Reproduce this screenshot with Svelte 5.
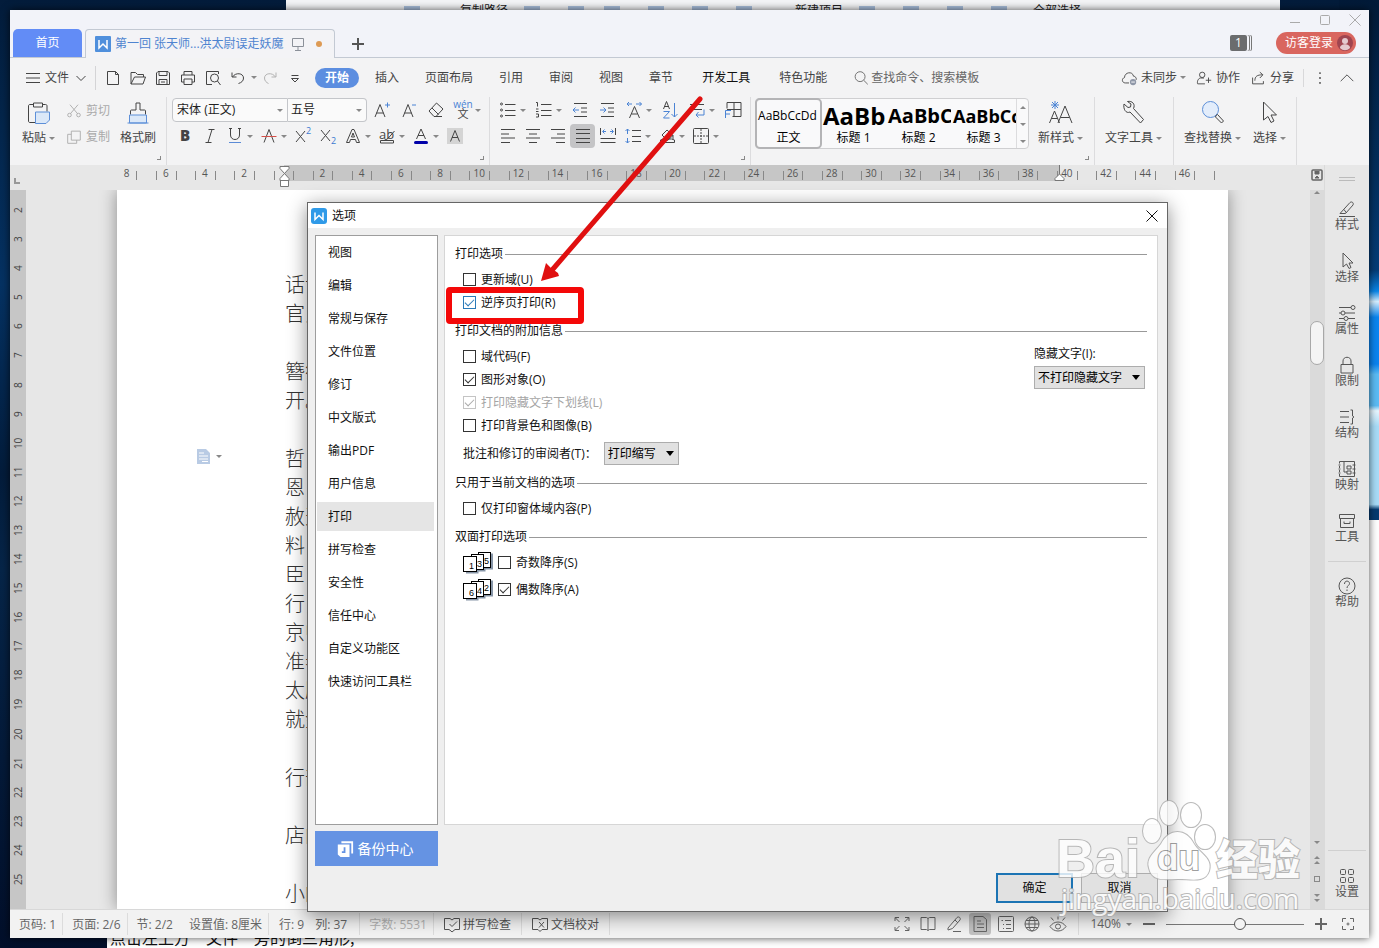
<script>
  const icons = {
    menu: '<path d="M3 5.500h14M3 10h14M3 14.500h14"/>',
    chevDown: '<path d="M5.500 8l4.500 4.500L14.500 8"/>',
    chevUp: '<path d="M3 13.500l7-7 7 7"/>',
    newDoc: '<path d="M4.500 3.500h8l3 3v10h-11zM12.500 3.500v3h3"/>',
    open: '<path d="M3 16V4.500h4.500l2 2h6v2.500M3 16l3.500-7h11l-2.500 7z"/>',
    save: '<path d="M3.500 5l1.500-1.500h10l1.500 1.500v11.500h-13zM6 3.500v4h8v-4M6 16.500v-5h8v5M8 14h4"/>',
    print: '<path d="M6 7V3.500h8V7M6 14H3.500V7h13v7H14M6 11h8v5.500H6z"/>',
    preview: '<path d="M9 16.500H3.500v-13h12V6"/><circle cx="11.500" cy="10" r="4"/><path d="M14.500 13l3 4"/>',
    undo: '<path d="M4 4.500v4.500h4.500M4.500 9c3-5 11-4 11 1 0 3-2 4.500-5 5.500"/>',
    redo: '<path d="M16 4.500v4.500h-4.500M15.500 9c-3-5-11-4-11 1 0 3 2 4.500 4 5.500"/>',
    more: '<path d="M6.500 7.500h7M6.500 10.500h7L10 14z"/>',
    search: '<circle cx="9" cy="8.500" r="5.500"/><path d="M13 12.500l4.500 4.500"/>',
    cloud: '<path d="M10 15.500H6c-4 0-4.500-5-1-6 0-6 9-7.500 10-1.500 2 0 3.500 2 3 4"/><circle cx="14.500" cy="14.500" r="3.500" fill="#8f97a8" stroke="none"/><path d="M12.500 14.500h4" stroke="#fff"/>',
    person: '<circle cx="8" cy="6.500" r="3"/><path d="M10 10H6c-4 1-3.500 6.500-3 6.500h8M12 12.500h6M15 9.500v6"/>',
    share: '<path d="M4 9.500v7h12v-3M6.500 13c0-5 3-6.500 8-6.500M12 3.500l3.500 3-3.500 3.500"/>',
    dots: '<g fill="currentColor" stroke="none"><circle cx="10" cy="4.500" r="1"/><circle cx="10" cy="10" r="1"/><circle cx="10" cy="15.500" r="1"/></g>',
    paste: '<path d="M6.500 4H3c-1 0-1.500.500-1.500 1.500v15c0 1 .500 1.500 1.500 1.500h5M15.500 4h3c1 0 1.500.500 1.500 1.500V11M6.500 2.500h9v4h-9z"/><path d="M8.500 11.500h14v8l-3.500 3.500h-10.500z" fill="#dbe8f8" stroke="#5d8fd8"/>',
    cut: '<circle cx="5" cy="14.500" r="2"/><circle cx="15" cy="14.500" r="2"/><path d="M6 13L14.500 3M14 13L5.500 3"/>',
    copy: '<path d="M7 3.500h10v10H7zM13 13.500V17H3V7h4"/>',
    brush: '<path d="M4.500 14V10.500c0-1 .500-1 1.500-1h4V2.500h4v7h4c1 0 1.500 0 1.500 1V14"/><path d="M3.500 14.500h17v8H3.500z" fill="#dbe8f8" stroke="#5d8fd8"/><path d="M1.500 22.500h21" stroke="#5d8fd8"/>',
    fontUp: '<path d="M3 17L8 4.500 13 17M4.500 13h7"/><path d="M13 5h5M15.500 2.500v5" stroke="#4a83d4"/>',
    fontDown: '<path d="M4 17L9 4.500 14 17M5.500 13h7"/><path d="M13 5h4" stroke="#4a83d4"/>',
    eraser: '<path d="M3 11l7.500-8 6.500 6-7 7.500H8zM6 8l6.500 6.500M9 16.500h7"/>',
    pinyin: '<text x="10" y="8" text-anchor="middle" font-size="10" fill="#4a83d4" stroke="none">wén</text><text x="10" y="18" text-anchor="middle" font-size="11" fill="currentColor" stroke="none">文</text>',
    bold: '<text x="10" y="15" text-anchor="middle" font-size="15" font-weight="800" fill="currentColor" stroke="none">B</text>',
    italic: '<path d="M8.500 3.500h6M5.500 16.500h6M12 3.500L8 16.500"/>',
    underline: '<path d="M5.500 2.500V9c0 6 9 6 9 0V2.500M4 2.500h3M13 2.500h3"/><path d="M4 16.500h12" stroke="#5b8bd6"/>',
    strike: '<path d="M5 16.500L10 3.500l5 13"/><path d="M2.500 10.500h15" stroke="#d4504a"/>',
    sup: '<path d="M3 5l9 11M12 5L3 16"/><text x="13" y="8" font-size="9" fill="#3b79d0" stroke="none">2</text>',
    sub: '<path d="M3 4l9 11M12 4L3 15"/><text x="13" y="18" font-size="9" fill="#3b79d0" stroke="none">2</text>',
    effect: '<path d="M3.500 16.500L9 3.500h2l5.500 13h-3l-1-3h-5l-1 3zM8.500 11h3L10 7z"/>',
    hilite: '<text x="2" y="13" font-size="13" fill="currentColor" stroke="none">ab</text><path d="M17.500 5l-7 8-3 1M3.500 14.500h13v2.500h-13z"/>',
    color: '<path d="M5.500 13l4.500-10 4.500 10M7 9.500h6"/><path d="M4.500 16.500h11" stroke="#0000a8" stroke-width="3" stroke-linecap="round"/>',
    shade: '<rect x="2" y="2" width="16" height="16" fill="#d4d4d4" stroke="none"/><path d="M5.500 15.500l4.500-11 4.500 11M7 11.500h6"/>',
    bullets: '<g><circle cx="3.500" cy="4" r="1"/><circle cx="3.500" cy="10" r="1"/><circle cx="3.500" cy="16" r="1"/></g><path d="M7 4.500h10.500M7 10.500h10.500M7 15.500h10.500"/>',
    numbers: '<path d="M2 2.500h1.500v4M2 9h2.500M2 11.500h2.500M2 14h2.500v3H2M7 4.500h10.500M7 10.500h10.500M7 15.500h10.500"/>',
    outdent: '<path d="M4 3.500h13M11 8h6M11 12h6M4 16.500h13"/><path d="M9 10H3M5.500 7.500L3 10l2.500 2.500" stroke="#4a83d4"/>',
    indent: '<path d="M4 3.500h13M11 8h6M11 12h6M4 16.500h13"/><path d="M3 10h6M6.500 7.500L9 10l-2.500 2.500" stroke="#4a83d4"/>',
    spread: '<path d="M5.500 18L10.500 6.500 15.500 18M7.500 14h6"/><path d="M8 4H3m2-2L3 4l2 2M12 4h5.500m-2-2l2 2-2 2" stroke="#4a83d4"/>',
    sort: '<path d="M3.500 9l3-7.500L9.500 9M4.500 6.500h4"/><path d="M3.500 11.500h6l-6 6.500h6M14.500 3v14M11.500 14l3 3 3-3" stroke="#4a83d4"/>',
    wrap: '<path d="M3 4.500h14M3 9.500h12"/><path d="M17 9.500V15H9m2.500-3L9 15l2.500 2.500" stroke="#4a83d4"/>',
    tab: '<path d="M4 8.500V2.500h14v14H9.500M11 2.500v14M4 9.500h14"/><path d="M2.500 18v-7.500H8M2.500 14H7" stroke="#4a83d4"/>',
    alLeft: '<path d="M3 3.500h14M3 8h8M3 12h14M3 16.500h9"/>',
    alCenter: '<path d="M3 3.500h14M6 8h8M3 12h14M6 16.500h8"/>',
    alRight: '<path d="M3 3.500h14M9 8h8M3 12h14M8 16.500h9"/>',
    justify: '<path d="M3 3.500h14M3 7.500h14M3 12.500h14M3 16.500h14"/>',
    distribute: '<path d="M2.500 2v7M17.500 2v7M2.500 12.500h15M2.500 16.500h15"/><path d="M8 5.500H5m1.500-2l-2 2 2 2M12 5.500h3m-1.500-2l2 2-2 2" stroke="#4a83d4"/>',
    leading: '<path d="M9 4.500h9M9 10.500h9M9 15.500h9"/><path d="M4.500 3v5M2.500 5l2-2 2 2M4.500 17v-5M2.500 15l2 2 2-2" stroke="#4a83d4"/>',
    fill: '<path d="M5 9l5-5 6 5.500-5.500 5zM16 9v4M3.500 14l3-1h8l3 1v2.500h-14z"/><path d="M6 17l9-8" stroke="#d4504a"/>',
    border: '<rect x="2.500" y="2.500" width="15" height="15" rx="1"/><path d="M10 3v14M3 10h14" stroke-dasharray="2 1"/>',
    newStyle: '<path d="M1.500 23l5-12 5 12M3.500 18.500h6M10 23l7-17 7 17M12.500 17.500h9"/><path d="M7 1v8M3 5h8M4 2l6 6M10 2L4 8" stroke="#4a83d4"/>',
    wrench: '<path d="M3 4l4 3.500 2.500-.500.500-3-3.500-2.500c5-1 8 3 6 7l10 11-3 3.500-10.500-11C5 14 2 9 3 4z"/>',
    find: '<circle cx="10.500" cy="9.500" r="8" fill="#e3edfb" stroke="#5d8fd8"/><path d="M16 15.500l1.500-1 6 6.500-2 2-6-6z"/>',
    pointer: '<path d="M6.500 2v18l4.500-3.500 3 6 3-1.500-3-6h5.500z"/>',
    pen: '<path d="M3 14.500L13 3.500c2-1.500 4 .500 3 2.500L8.500 14.500zM2 17.500h16M7 10.500l2.500 3.500"/>',
    cursor: '<path d="M6 2v14l3.500-3 2.500 4.500 2-1-2-4.500h4z"/>',
    sliders: '<path d="M2 4.500h12M2 10h2M8 10h10M2 15.500h5M11 15.500h7"/><circle cx="16" cy="4.500" r="2"/><circle cx="6" cy="10" r="2"/><circle cx="9" cy="15.500" r="2"/>',
    lock: '<path d="M4 9.500h12v8.500H4zM6 9.500V6c0-5 8-5 8 0v3.500"/>',
    struct: '<path d="M3 4.500h9M3 10h9M3 15.500h9M13.500 3h2v6l1.500 1-1.500 1v6h-2"/>',
    mapping: '<path d="M2.500 2.500h15v15h-15M2.500 2.500v2M2.500 7v2M2.500 11v2M2.500 15v2.500M1.500 6h2M1.500 10h2M1.500 14h2M15.500 6h3M15.500 10h3M15.500 14h3M7 3v10h3M10 7h4v3h-4zM10 12h4v3h-4z"/>',
    box: '<path d="M2.500 3.500h15v4h-15zM3.500 7.500h13v9h-13zM7 10.500v2h6v-2"/>',
    help: '<circle cx="10" cy="10" r="8"/><path d="M7.500 8c0-4 5-3.500 5-.500 0 2-2.500 2-2.500 4.500M10 13.500v1.500"/>',
    grid: '<rect x="3.500" y="3.500" width="5" height="5" rx="1"/><rect x="11.500" y="3.500" width="5" height="5" rx="1"/><rect x="3.500" y="11.500" width="5" height="5" rx="1"/><rect x="11.500" y="11.500" width="5" height="5" rx="1"/>',
    bookOk: '<path d="M9 16L7 14.500H2.500v-11H8l2 1.500 2-1.500h5.500v11H13L10 17zM7.500 9l2.500 2.500 5-5"/>',
    bookX: '<path d="M10 16.500l-2-2H2.500v-11H8l2 1.500 2-1.500h5.500v11H12zM9 7l5 5.500M14 7l-5 5.500"/>',
    full: '<path d="M3 7V3.500h4M3.500 4l4 4M13 3.500h4V7M16.500 4l-4 4M3 13v3.500h4M3.500 16l4-4M13 16.500h4V13M16.500 16l-4-4"/>',
    book: '<path d="M10 4.500L8.500 3.500H3v12h5.500l1.500 1 1.500-1H17v-12h-5.500zM10 4.500v12"/>',
    pencil: '<path d="M4 14L13 3.500c2-1.500 4 .500 3 2.500L8.500 14.500 4 16zM9 17.500h8M11 6l3 3"/>',
    page: '<path d="M4 2.500h9l3.500 3v12H4zM7 7h4M7 10h7M7 13.500h7"/>',
    outline: '<rect x="2.500" y="2.500" width="15" height="15" rx="1"/><path d="M5.500 6.500h1.500M9 6.500h6M7 10.500h1M10 10.500h5M7 14.500h1M10 14.500h5"/>',
    globe: '<circle cx="10" cy="10" r="7"/><ellipse cx="10" cy="10" rx="3" ry="7"/><path d="M3 10h14M4 6.500h12M4 13.500h12"/>',
    eye: '<path d="M2 12.500c4-6 12-6 16 0-4 6-12 6-16 0z"/><circle cx="10" cy="12.500" r="2.500"/><path d="M10 5.500V2.500M5.500 6.500L3 3.500M14.500 6.500L17 3.500"/>',
    minus: '<path d="M4 10h12" stroke-width="2"/>',
    plus: '<path d="M4 10h12M10 4v12" stroke-width="2"/>',
    fit: '<path d="M4.500 8V4.500H8M12 4.500h3.500V8M15.500 12v3.500H12M8 15.500H4.500V12M10 8.500v3M8.500 10h3"/>',
    monitor: '<path d="M4.500 4.500h11v8h-11zM10 12.500v4M7 16.500h6"/>',
    backup: '<path d="M6 2.500h12V15" stroke-width="2"/><path d="M2 5h13v14H5l-3-3z" fill="#fff" stroke="none"/><path d="M9.500 8v5.500H6.500" stroke="#6593e3" stroke-width="2"/>',
    close: '<path d="M4.500 4.500l11 11M15.500 4.500l-11 11"/>',
    winMin: '<path d="M5 12.500h10"/>',
    winMax: '<rect x="5.500" y="5.500" width="9" height="9" rx="1"/>'
  };

  const quick = ['newDoc', 'open', 'save', 'print', 'preview'];
  const menus = ['开始', '插入', '页面布局', '引用', '审阅', '视图', '章节', '开发工具', '特色功能'];
  const fontTop = [['fontUp'], ['fontDown'], ['eraser'], ['pinyin', 1]];
  const fontBottom = [['bold'], ['italic'], ['underline', 1], ['strike', 1], ['sup'], ['sub'], ['effect', 1], ['hilite', 1], ['color', 1], ['shade']];
  const paraTop = [['bullets', 1], ['numbers', 1], ['outdent'], ['indent'], ['spread', 1], ['sort'], ['wrap', 1], ['tab']];
  const paraBottom = [['alLeft'], ['alCenter'], ['alRight'], ['justify'], ['distribute'], ['leading', 1], ['fill', 1], ['border', 1]];
  const styles = [
    { name: '正文', sample: 'AaBbCcDd', kind: 'plain' },
    { name: '标题 1', sample: 'AaBb', kind: 'h1' },
    { name: '标题 2', sample: 'AaBbC', kind: 'h2' },
    { name: '标题 3', sample: 'AaBbCc', kind: 'h3' }
  ];
  const hRuler = [8, 6, 4, 2, 0, ...Array.from({ length: 23 }, (_, i) => (i + 1) * 2)];
  const vRuler = Array.from({ length: 24 }, (_, i) => i + 2);
  const lines = ['话说', '官员', '', '簪笏', '开。', '', '哲，', '恩，', '赦天', '料，', '臣，', '行，', '京师', '准奏', '太尉', '就金', '', '行部', '', '店内', '', '小的'];
  const side = [['pen', '样式'], ['cursor', '选择'], ['sliders', '属性'], ['lock', '限制'], ['struct', '结构'], ['mapping', '映射'], ['box', '工具']];
  const pages = ['视图', '编辑', '常规与保存', '文件位置', '修订', '中文版式', '输出PDF', '用户信息', '打印', '拼写检查', '安全性', '信任中心', '自定义功能区', '快速访问工具栏'];
  const views = ['full', 'book', 'pencil', 'page', 'outline', 'globe', 'eye'];

  let current = $state('打印');
  let zoom = $state(54);
  let opts = $state({ update: false, reverse: true, codes: false, graphics: true, hidden: true, background: false, form: false, odd: false, even: true });
</script>

{#snippet icon(name, size = 20, box = 20)}
  <svg width={size} height={size} viewBox="0 0 {box} {box}" fill="none" stroke="currentColor" aria-hidden="true">{@html icons[name]}</svg>
{/snippet}

{#snippet tools(list, spaced)}
  <div class="tools" class:spaced>
    {#each list as [name, drop]}
      <button class="tool" class:drop class:on={name === 'justify'} aria-label={name}>
        <span class="glyph">{@render icon(name)}</span>
        {#if drop}<i class="caret"></i>{/if}
      </button>
    {/each}
  </div>
{/snippet}

{#snippet check(key, text, disabled = false)}
  <label class="check" class:disabled>
    <input type="checkbox" bind:checked={opts[key]} {disabled} class:hot={key === 'reverse'} />{text}
  </label>
{/snippet}

{#snippet order(digits)}
  <svg width="30" height="22" viewBox="0 0 30 22" fill="#fff" stroke="#000" aria-hidden="true">
    <path d="M3 20.500h11.500v-2h7v-2h7.500v-15" fill="none" stroke="#8796a8" stroke-width="2" />
    <rect x="15.500" y=".5" width="12" height="15" />
    <rect x="8.500" y="2.500" width="12" height="15" />
    <rect x=".5" y="4.500" width="13" height="15" />
    <g fill="#000" stroke="none" font-size="9" font-family="Liberation Sans">
      <text x="6" y="17">{digits[0]}</text><text x="14" y="15">{digits[1]}</text><text x="21" y="12">{digits[2]}</text>
    </g>
  </svg>
{/snippet}

<div class="desktop">
  <div class="explorer">
    <span class="peek"></span><span>复制路径</span><span class="peek"></span><span class="peek"></span><span>新建项目</span><span class="peek"></span><span>全部选择</span>
  </div>
  <div class="article">点击左上方“文件”旁的倒三角形,</div>
  <div class="sky"></div>

  <div class="window">
    <header class="titlebar">
      <button class="home">首页</button>
      <div class="tab">
        <svg width="16" height="16" viewBox="0 0 16 16" aria-hidden="true"><rect width="16" height="16" rx="1" fill="#4f8fdc" /><path d="M4 4v8l4-4 4 4V4" fill="none" stroke="#fff" stroke-width="1.500" /></svg>
        <span>第一回 张天师...洪太尉误走妖魔</span>
        <span class="monitor">{@render icon('monitor')}</span>
        <i class="dot"></i>
      </div>
      <button class="add" aria-label="新建">{@render icon('plus')}</button>
      <div class="corner">
        <div class="winbtns">
          <button aria-label="最小化">{@render icon('winMin')}</button>
          <button aria-label="最大化">{@render icon('winMax')}</button>
          <button aria-label="关闭">{@render icon('close')}</button>
        </div>
        <div class="account">
          <span class="count">1</span>
          <button class="login">访客登录
            <svg width="16" height="16" viewBox="0 0 16 16" aria-hidden="true"><circle cx="8" cy="8" r="8" fill="#a04550" /><circle cx="8" cy="6" r="3" fill="#e5c9cf" /><path d="M3 13c0-5 10-5 10 0-3 3-7 3-10 0z" fill="#e5c9cf" /></svg>
          </button>
        </div>
      </div>
    </header>

    <nav class="menubar">
      <button class="file">{@render icon('menu')}<span>文件</span>{@render icon('chevDown')}</button>
      <div class="quick">
        {#each quick as q}<button aria-label={q}>{@render icon(q)}</button>{/each}
        <button aria-label="撤销">{@render icon('undo')}</button><i class="caret"></i>
        <button class="faint" aria-label="恢复">{@render icon('redo')}</button>
        <button aria-label="更多">{@render icon('more')}</button>
      </div>
      <div class="menus">
        {#each menus as m, i}<button class:active={i === 0} class:strong={m === '开发工具'}>{m}</button>{/each}
      </div>
      <button class="cmd">{@render icon('search', 18)}查找命令、搜索模板</button>
      <div class="share">
        <button>{@render icon('cloud', 18)}未同步<i class="caret"></i></button>
        <button>{@render icon('person', 18)}协作</button>
        <button>{@render icon('share', 18)}分享</button>
        <button class="sep" aria-label="更多">{@render icon('dots', 18)}</button>
        <button aria-label="收起">{@render icon('chevUp', 18)}</button>
      </div>
    </nav>

    <section class="ribbon">
      <div class="group clip launch">
        <button class="big">{@render icon('paste', 24, 24)}<span>粘贴<i class="caret"></i></span></button>
        <div class="stack">
          <button>{@render icon('cut', 18)}剪切</button>
          <button>{@render icon('copy', 18)}复制</button>
        </div>
        <button class="big">{@render icon('brush', 24, 24)}<span>格式刷</span></button>
      </div>
      <div class="group launch">
        <div class="rows">
          <div class="line">
            <div class="combos">
              <button class="face">宋体 (正文)<i class="caret"></i></button>
              <button class="size">五号<i class="caret"></i></button>
            </div>
            {@render tools(fontTop, true)}
          </div>
          {@render tools(fontBottom, false)}
        </div>
      </div>
      <div class="group launch">
        <div class="rows">
          {@render tools(paraTop, true)}
          {@render tools(paraBottom, false)}
        </div>
      </div>
      <div class="group styles launch">
        <div class="gallery">
          {#each styles as s, i}
            <button class="style" class:picked={i === 0}><b class={s.kind}>{s.sample}</b><span>{s.name}</span></button>
          {/each}
          <div class="spin"><i class="caret up"></i><i class="caret"></i><i class="caret last"></i></div>
        </div>
        <button class="big">{@render icon('newStyle', 25, 25)}<span>新样式<i class="caret"></i></span></button>
      </div>
      <div class="group single"><button class="big">{@render icon('wrench', 25, 25)}<span>文字工具<i class="caret"></i></span></button></div>
      <div class="group find">
        <button class="big">{@render icon('find', 25, 25)}<span>查找替换<i class="caret"></i></span></button>
        <button class="big">{@render icon('pointer', 25, 25)}<span>选择<i class="caret"></i></span></button>
      </div>
    </section>

    <main class="work">
      <div class="doc">
        <div class="hruler">
          <div class="band"></div>
          <div class="nums">{#each hRuler as n}<span>{n || ''}</span>{/each}<em></em></div>
          <svg class="mark" width="11" height="24" viewBox="0 0 11 24" fill="#fff" stroke="#777" aria-hidden="true"><path d="M1 1.500h9v2L5.500 8.500 1 3.500zM5.500 8.500L1 13.500v2h9v-2zM1.500 15.500h8v6h-8z" /></svg>
          <svg class="mark end" width="11" height="24" viewBox="0 0 11 24" fill="#fff" stroke="#777" aria-hidden="true"><path d="M5.500 0v9L1 13.500v2h9v-2L5.500 9" /></svg>
        </div>
        <div class="canvas">
          <div class="vruler">{#each vRuler as n}<span>{n}</span>{/each}</div>
          <div class="paper">
            <button class="para" aria-label="段落">
              <svg width="13" height="15" viewBox="0 0 13 15" aria-hidden="true"><path d="M0 0h9l4 4v11H0z" fill="#b9cbe4" /><path d="M2 4h5M2 7h9M2 10h9M5 12.500h6" stroke="#fff" /></svg>
              <i class="caret"></i>
            </button>
            <div class="text">{#each lines as l}<p>{l}</p>{/each}</div>
          </div>
        </div>
      </div>
      <div class="vscroll">
        <svg width="12" height="12" viewBox="0 0 12 12" fill="none" stroke="#666" aria-hidden="true"><rect x="1" y="1" width="10" height="10" rx="1" stroke-width="1.500" /><path d="M4 2v3h4V2M4 9l2-2 2 2z" fill="#666" /></svg>
        <div class="track">
          <i class="caret up"></i>
          <div class="thumb"></div>
          <div class="jump"><i class="caret"></i><span><i class="caret up"></i><i class="caret up"></i></span><b></b><span><i class="caret"></i><i class="caret"></i></span></div>
        </div>
      </div>
      <aside class="side">
        <div class="grip"></div>
        {#each side as [ic, label]}<button>{@render icon(ic)}<span>{label}</span></button>{/each}
        <div class="rule"></div>
        <button>{@render icon('help')}<span>帮助</span></button>
        <div class="rule bottom"></div>
        <button>{@render icon('grid')}<span>设置</span></button>
      </aside>
    </main>

    <footer class="status">
      <span class="cell">页码: 1</span>
      <span class="cell">页面: 2/6</span>
      <span class="cell wide"><span>节: 2/2</span><span>设置值: 8厘米</span></span>
      <span class="cell tight"><span>行: 9</span><span>列: 37</span></span>
      <span class="cell faint">字数: 5531</span>
      <button class="cell dark">{@render icon('bookOk')}拼写检查</button>
      <button class="cell dark">{@render icon('bookX')}文档校对</button>
      <div class="views">
        {#each views as v}<button class:on={v === 'page'} aria-label={v}>{@render icon(v)}</button>{/each}
      </div>
      <div class="zoom">
        <span>140%<i class="caret"></i></span>
        <button aria-label="缩小">{@render icon('minus')}</button>
        <input type="range" min="0" max="100" bind:value={zoom} aria-label="显示比例" />
        <button aria-label="放大">{@render icon('plus')}</button>
        <button aria-label="适合">{@render icon('fit')}</button>
      </div>
    </footer>
  </div>

  <div class="dialog" role="dialog" aria-label="选项">
    <div class="caption">
      <svg width="16" height="16" viewBox="0 0 16 16" aria-hidden="true"><rect width="16" height="16" rx="3" fill="#2f9ae8" /><path d="M4 4.500v7l4-4 4 4v-7" fill="none" stroke="#fff" stroke-width="1.500" /></svg>
      <span>选项</span>
      <button aria-label="关闭">{@render icon('close')}</button>
    </div>
    <div class="body">
      <div class="list">
        {#each pages as p}<button class:selected={p === current} onclick={() => (current = p)}>{p}</button>{/each}
      </div>
      <div class="panel">
        <h3>打印选项</h3>
        <div class="fields">
          {@render check('update', '更新域(U)')}
          {@render check('reverse', '逆序页打印(R)')}
        </div>
        <h3 class="next">打印文档的附加信息</h3>
        <div class="fields split">
          <div>
            {@render check('codes', '域代码(F)')}
            {@render check('graphics', '图形对象(O)')}
            {@render check('hidden', '打印隐藏文字下划线(L)', true)}
            {@render check('background', '打印背景色和图像(B)')}
            <div class="review">
              <label for="review">批注和修订的审阅者(T)：</label>
              <span class="select"><select id="review"><option>打印缩写</option></select></span>
            </div>
          </div>
          <div class="conceal">
            <label for="conceal">隐藏文字(I):</label>
            <span class="select"><select id="conceal"><option>不打印隐藏文字</option></select></span>
          </div>
        </div>
        <h3>只用于当前文档的选项</h3>
        <div class="fields">{@render check('form', '仅打印窗体域内容(P)')}</div>
        <h3 class="next">双面打印选项</h3>
        <div class="duplex">{@render order('135')}{@render check('odd', '奇数降序(S)')}</div>
        <div class="duplex">{@render order('642')}{@render check('even', '偶数降序(A)')}</div>
      </div>
      <button class="backup">{@render icon('backup', 18)}备份中心</button>
      <div class="actions">
        <button class="ok">确定</button>
        <button>取消</button>
      </div>
    </div>
  </div>

  <svg class="note" width="260" height="240" viewBox="0 0 260 240" fill="none" aria-hidden="true">
    <rect x="4" y="199" width="132" height="31" rx="1" stroke="#f40808" stroke-width="6" />
    <path d="M255 8L108 178" stroke="#e01010" stroke-width="5" stroke-linecap="round" />
    <path d="M96 190l5-18 5 5 7 5 1 3z" fill="#e01010" />
  </svg>

  <svg class="mark-logo" width="256" height="124" viewBox="0 0 256 124" aria-hidden="true">
    <g fill="#fff" stroke="#aaa" stroke-width="2" paint-order="stroke">
      <text x="6" y="81" font-size="54" font-weight="700" font-family="Liberation Sans">Bai</text>
      <ellipse cx="102" cy="35" rx="9" ry="12" />
      <ellipse cx="119" cy="17" rx="9" ry="12" />
      <ellipse cx="141" cy="19" rx="10" ry="12" />
      <ellipse cx="155" cy="41" rx="10" ry="12" />
      <path d="M99 72c-3-10 5-15 12-24 8-16 25-16 33 0 6 10 19 14 15 27-4 12-17 8-31 8s-26 3-29-11z" />
      <text x="107" y="74" font-size="35" font-weight="700" font-family="Liberation Sans" stroke="#888">du</text>
      <text x="166" y="79" font-size="42" font-weight="900" font-family="Noto Sans CJK SC">经验</text>
      <text x="11" y="113" font-size="28" font-family="Open Sans">jingyan.baidu.com</text>
    </g>
  </svg>
</div>

<style>
  :global(body) { margin: 0; }
  .desktop {
    position: relative;
    height: 100vh;
    overflow: hidden;
    background: linear-gradient(#031c3b, #04254a 12%, #053263 30%, #031c3b 50%, #062548 60%, #020f2a 100%);
    font: 12px/16px "Open Sans", "Noto Sans CJK SC", sans-serif;
    color: #444;
  }
  .desktop :global(svg) { display: block; flex: none; }
  button {
    display: flex;
    align-items: center;
    padding: 0;
    border: 0;
    background: none;
    font: inherit;
    color: inherit;
    white-space: nowrap;
  }
  .caret { width: 0; height: 0; flex: none; border: 3px solid transparent; border-top-color: #888; border-bottom: 0; }
  .caret.up { border-top: 0; border-bottom: 3px solid #888; }

  /* what shows behind the application window */
  .explorer {
    position: absolute;
    top: 0; left: 286px; right: 99px;
    display: grid;
    grid-template-columns: 40px 48px 64px 175px 48px 158px 48px;
    column-gap: 16px;
    box-sizing: border-box;
    height: 20px;
    padding: 3px 0 0 118px;
    background: #f4f5f7;
    color: #222;
  }
  .peek { height: 10px; margin-top: 3px; background: linear-gradient(90deg, #a9bfdc 16px, transparent 16px) 0 0 / 44px 100%; }
  .article {
    position: absolute;
    left: 107px; right: 0; bottom: 0;
    height: 428px;
    box-sizing: border-box;
    padding: 407px 0 0 3px;
    background: #fff;
    font-family: "Noto Sans CJK SC", sans-serif;
    font-size: 16px;
    line-height: 20px;
    color: #111;
  }
  .sky {
    position: absolute;
    top: 0; right: 0;
    width: 40px; height: 520px;
    background: linear-gradient(#021a38, #03305f 35%, #043d78 52%, #0a86e8 56%, #d6efff 58%, #0a86f0 61%, #0a84f0 70%, #5cbcf5 72%, #5cbcf5 78%, #e8f7ff 79%, #a8dcf8 82%, #a8dcf8 97%, #043a70 98%);
  }

  .window {
    position: absolute;
    inset: 10px;
    display: flex;
    flex-direction: column;
    background: #f3f3f4;
    box-shadow: 0 0 8px rgba(0, 0, 0, .7);
  }
  .titlebar {
    display: flex;
    align-items: flex-end;
    height: 47px;
    padding-left: 3px;
    background: #f2f3f9;
    border-bottom: 1px solid #c3c9d3;
  }
  .home { justify-content: center; width: 69px; height: 28px; border-radius: 5px 5px 0 0; background: #628cf6; color: #fff; }
  .tab {
    display: flex;
    align-items: center;
    gap: 4px;
    box-sizing: border-box;
    width: 250px; height: 29px;
    margin: 0 0 -1px 3px;
    padding: 0 12px 0 9px;
    border: 1px solid #c3c9d3;
    border-bottom: 0;
    border-radius: 4px 4px 0 0;
    background: #f3f3f6;
    color: #4f84d0;
    white-space: nowrap;
  }
  .monitor { color: #8b9099; }
  .dot { width: 6px; height: 6px; margin-left: auto; border-radius: 50%; background: #dd9a54; }
  .add { margin: 0 auto 3px 13px; color: #555; }
  .corner { display: flex; flex-direction: column; align-items: flex-end; justify-content: space-between; height: 44px; padding-bottom: 3px; }
  .winbtns { display: flex; gap: 10px; padding-right: 4px; color: #aaa; height: 20px; }
  .account { display: flex; align-items: center; height: 23px; padding-right: 13px; }
  .count {
    width: 17px; height: 16px;
    margin-right: 29px;
    border-radius: 2px;
    background: #6b6c6e;
    box-shadow: 2px 0 #f2f3f9, 3px 0 #777, 4px 0 #f2f3f9, 5px 0 #777;
    color: #fff;
    text-align: center;
  }
  .login { gap: 4px; height: 22px; padding: 0 3px 0 9px; border-radius: 11px; background: #d9665f; color: #fff; }

  .menubar { display: flex; align-items: center; height: 39px; }
  .file { gap: 2px; padding: 0 4px 0 13px; border-right: 1px solid #d4d4d6; height: 24px; }
  .quick { display: flex; align-items: center; gap: 5px; padding: 0 10px 0 7px; }
  .quick .caret { margin: 0 -2px; }
  .faint { color: #b3b3b3; }
  .menus { display: flex; gap: 6px; }
  .menus button { height: 20px; padding: 0 10px; border-radius: 10px; }
  .menus .active { background: #5c8ee0; color: #fff; font-weight: 700; }
  .menus .strong { margin: 0 3px; color: #111; }
  .cmd { margin-left: 15px; gap: 1px; color: #666; }
  .share { display: flex; align-items: center; gap: 9px; margin-left: auto; padding-right: 13px; }
  .share button { gap: 3px; }
  .share .sep { padding-left: 7px; border-left: 1px solid #d8d8da; }

  .ribbon { display: flex; height: 68px; }
  .group { position: relative; display: flex; align-items: flex-start; gap: 8px; padding: 1px 5px 0; border-right: 1px solid #dcdcde; }
  .launch::after { content: ""; position: absolute; right: 5px; bottom: 5px; width: 3px; height: 3px; border: solid #888; border-width: 0 1px 1px 0; }
  .clip { padding: 1px 10px 0 12px; gap: 10px; }
  .big { flex-direction: column; gap: 5px; padding-top: 2px; }
  .big :global(svg) { height: 25px; }
  .big span { display: flex; align-items: center; gap: 3px; }
  .stack { display: flex; flex-direction: column; gap: 10px; padding-top: 5px; color: #aaa; }
  .stack button { gap: 3px; height: 16px; }
  .rows { display: flex; flex-direction: column; gap: 2px; }
  .line { display: flex; gap: 2px; }
  .combos { display: flex; }
  .combos button { justify-content: space-between; box-sizing: border-box; height: 24px; padding: 0 4px; border: 1px solid #c4c6ca; background: #fafafa; color: #222; }
  .face { width: 116px; border-radius: 4px 0 0 4px; }
  .combos .size { width: 79px; border-left: 0; border-radius: 0 4px 4px 0; padding-left: 3px; }
  .tools { display: flex; height: 24px; }
  .tools.spaced { gap: 2px; }
  .glyph { display: flex; justify-content: center; width: 25px; }
  .drop { padding-right: 3px; }
  .tool.on { border-radius: 4px; background: #c4c4c6; }
  .styles { gap: 9px; padding: 1px 11px 0 4px; }
  .gallery { display: flex; box-sizing: border-box; height: 51px; border: 1px solid #cfcfd1; border-radius: 4px; background: #f9f9fa; color: #000; }
  .style { flex-direction: column; box-sizing: border-box; width: 65px; padding: 0 2px; overflow: hidden; border-radius: 4px; }
  .picked { outline: 2px solid #b4b4b6; outline-offset: -1px; }
  .style b { align-self: flex-start; height: 31px; line-height: 34px; }
  .style .plain { font-weight: 400; }
  .style .h1 { font-size: 24px; }
  .style .h2 { font-size: 20px; }
  .style .h3 { font-size: 18px; }
  .spin { display: flex; flex-direction: column; justify-content: space-between; align-items: center; width: 11px; padding: 7px 0 5px; border-left: 1px solid #dcdcde; }
  .single { padding: 1px 11px 0 10px; }
  .find { gap: 12px; padding: 1px 10px 0; }

  .work { display: flex; flex: 1; min-height: 0; background: #e7e7e7; }
  .doc { display: flex; flex-direction: column; flex: 1; min-width: 0; }
  .hruler { position: relative; height: 25px; }
  .hruler::before { content: ""; position: absolute; left: 4px; top: 13px; width: 4px; height: 4px; border: solid #999; border-width: 0 0 2px 2px; }
  .band { position: absolute; inset: 0 250px 9px 274px; background: #c6c6c6; }
  .nums { position: relative; display: grid; grid-template-columns: repeat(28, 1fr); margin: 0 106px 0 97px; font-size: 10px; text-align: center; color: #555; }
  .nums span { position: relative; height: 16px; }
  .nums span::before, .nums span::after { content: ""; position: absolute; top: 6px; left: 25%; width: 1px; height: 9px; background: #888; }
  .nums span::after { left: 75%; }
  .nums span:first-child::before { display: none; }
  .nums em { position: absolute; right: -11px; top: 6px; width: 1px; height: 9px; background: #888; }
  .mark { position: absolute; left: 269px; top: 0; }
  .mark.end { left: auto; right: 245px; }
  .canvas { display: flex; flex: 1; min-height: 0; }
  .vruler { display: grid; grid-template-rows: repeat(24, 1fr); box-sizing: border-box; width: 16px; padding: 6px 0 15px; background: #c6c6c6; font-size: 10px; color: #444; }
  .vruler span { display: flex; align-items: center; justify-content: center; writing-mode: vertical-rl; transform: rotate(180deg); min-height: 0; }
  .paper { position: relative; flex: 1; margin: 0 82px 0 91px; background: #fff; box-shadow: 0 0 16px rgba(0, 0, 0, .4); clip-path: inset(0 -20px); }
  .text { padding: 81px 0 0 168px; overflow: hidden; font-family: "Liberation Serif", "Noto Sans CJK SC", serif; font-weight: 300; font-size: 20px; line-height: 29px; color: #333; }
  .text p { height: 29px; margin: 0; }
  .para { position: absolute; left: 80px; top: 259px; gap: 6px; }
  .vscroll { display: flex; flex-direction: column; align-items: center; width: 14px; padding-top: 4px; gap: 9px; border-right: 1px solid #dadada; }
  .track { display: flex; flex-direction: column; align-items: center; flex: 1; width: 14px; background: #dadada; }
  .thumb { box-sizing: border-box; width: 14px; height: 44px; margin-top: 127px; border: 1px solid #a8a8a8; border-radius: 7px; background: #f4f4f4; }
  .jump { display: flex; flex-direction: column; align-items: center; gap: 12px; margin-top: auto; padding-bottom: 7px; }
  .jump span { display: flex; flex-direction: column; gap: 2px; }
  .jump b { width: 4px; height: 4px; border: 1px solid #888; }
  .track > .caret { margin-top: 1px; }
  .side { display: flex; flex-direction: column; align-items: center; width: 44px; color: #555; }
  .side button { flex-direction: column; height: 52px; }
  .side button span { margin-top: -2px; }
  .grip { width: 16px; height: 2px; margin: 12px 0 18px; border: solid #bbb; border-width: 1px 0; }
  .rule { width: 38px; height: 1px; margin-bottom: 16px; background: #d0d0d0; }
  .rule.bottom { margin-top: auto; margin-bottom: 15px; }
  .side .rule:not(.bottom) { margin-top: -2px; margin-bottom: 14px; }
  .side button:last-child { height: 43px; }

  .status { display: flex; align-items: center; height: 28px; border-top: 1px solid #d8d8d8; background: #f2f2f2; color: #666; }
  .cell { display: flex; align-items: center; gap: 16px; height: 22px; padding: 2px 6px 0 9px; border-right: 1px solid #dcdcdc; white-space: nowrap; box-sizing: border-box; }
  .tight { gap: 11px; padding: 2px 12px 0 10px; }
  .dark { gap: 1px; padding: 2px 10px 0 8px; color: #555; }
  .views { display: flex; gap: 4px; margin-left: auto; padding-right: 9px; border-right: 1px solid #dcdcdc; }
  .views button { justify-content: center; width: 22px; height: 22px; border-radius: 3px; }
  .views .on { background: #c2c2c2; }
  .zoom { display: flex; align-items: center; padding: 0 11px; gap: 7px; }
  .zoom span { display: flex; align-items: center; gap: 5px; }
  .zoom input { appearance: none; width: 138px; height: 14px; margin: 0; background: linear-gradient(#777, #777) center / 100% 1px no-repeat; }
  .zoom input::-webkit-slider-thumb { appearance: none; width: 12px; height: 12px; border: 1px solid #555; border-radius: 50%; background: #f4f4f4; }

  .dialog {
    position: absolute;
    inset: 202px 211px 36px 307px;
    display: flex;
    flex-direction: column;
    border: 1px solid #666;
    background: #efefef;
    box-shadow: 0 4px 18px rgba(0, 0, 0, .45);
    color: #111;
  }
  .caption { display: flex; align-items: center; gap: 5px; height: 25px; padding: 0 5px 0 3px; background: #fff; }
  .caption button { margin-left: auto; }
  .body { display: grid; flex: 1; min-height: 0; grid-template: minmax(0, 1fr) 72px / 123px minmax(0, 1fr); gap: 6px; padding: 7px 9px 8px 7px; }
  .list { display: flex; flex-direction: column; gap: 4px; padding: 2px 3px 0 1px; border: 1px solid #9d9d9d; background: #fff; }
  .list button { height: 29px; padding-left: 11px; }
  .list .selected { background: #e5e5e5; }
  .panel { padding: 6px 10px; border: 1px solid #d6d6d6; background: #fff; }
  h3 { display: flex; align-items: center; gap: 2px; height: 24px; margin: 0; font: inherit; white-space: nowrap; }
  h3::after { content: ""; flex: 1; height: 1px; background: #999; }
  .next { margin-top: 5px; }
  .fields { padding: 2px 0 0 8px; }
  .split { display: flex; justify-content: space-between; padding-bottom: 1px; }
  .check { display: flex; align-items: center; gap: 5px; height: 23px; white-space: nowrap; }
  .check input { appearance: none; flex: none; display: grid; place-items: center; box-sizing: border-box; width: 13px; height: 13px; margin: 0; border: 1px solid #333; background: #fff; color: #333; }
  .check input:checked::before { content: ""; width: 9px; height: 5px; margin-top: -3px; border: solid; border-width: 0 0 1px 1px; box-sizing: border-box; transform: rotate(-45deg); }
  .check .hot { border-color: #2a7ab8; color: #2a7ab8; }
  .check.disabled { color: #a5a5a5; }
  .disabled input { border-color: #c4c4c4; color: #aaa; }
  .review { display: flex; align-items: center; gap: 7px; height: 33px; }
  .select { position: relative; display: block; }
  .select::after { content: ""; position: absolute; right: 5px; top: 9px; border: 4px solid transparent; border-top: 5px solid #000; border-bottom: 0; pointer-events: none; }
  select { appearance: none; height: 23px; box-sizing: border-box; padding: 0 21px 0 3px; border: 1px solid #adadad; border-radius: 0; background: #e1e1e1; font: inherit; color: #000; }
  .conceal { display: flex; flex-direction: column; gap: 4px; padding: 1px 2px 0 0; }
  .duplex { display: flex; align-items: center; gap: 5px; height: 27px; padding-left: 8px; }
  .backup { align-self: start; justify-content: center; gap: 4px; height: 35px; padding-right: 4px; background: #6593e3; color: #fff; font-size: 14px; }
  .actions { display: flex; justify-content: flex-end; align-items: flex-end; gap: 8px; }
  .actions button { justify-content: center; box-sizing: border-box; width: 77px; height: 30px; border: 1px solid #adadad; background: #e1e1e1; }
  .actions .ok { border: 2px solid #1c74b4; }

  .note { position: absolute; left: 445px; top: 91px; pointer-events: none; }
  .mark-logo { position: absolute; right: 73px; bottom: 28px; opacity: .8; pointer-events: none; }
</style>
